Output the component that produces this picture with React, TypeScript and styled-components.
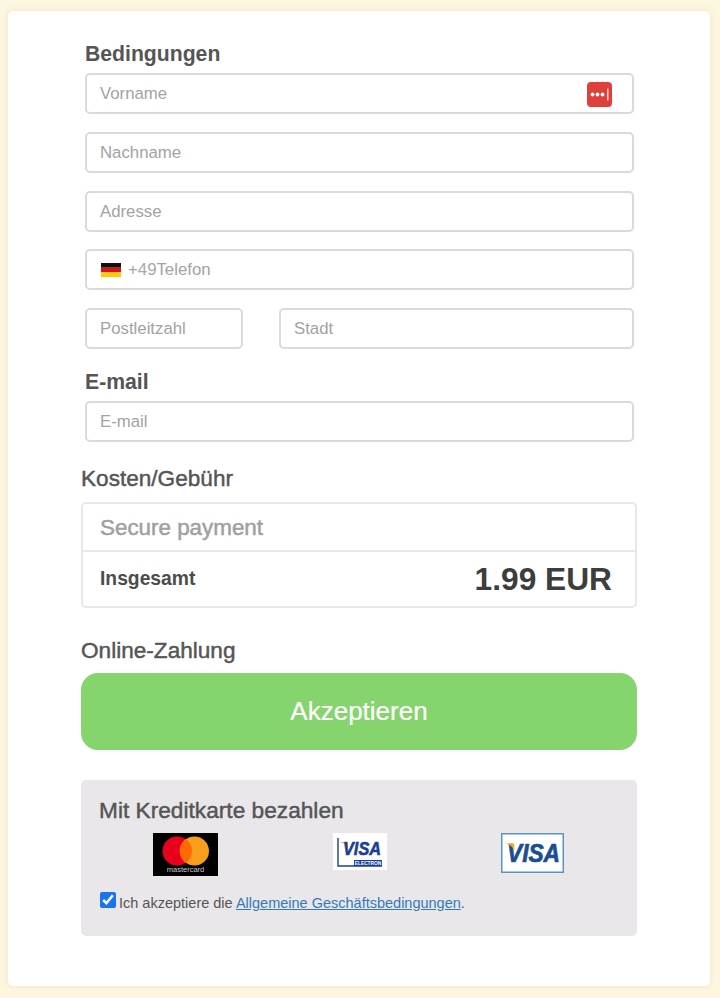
import React from "react";
import styled, { createGlobalStyle } from "styled-components";

const Global = createGlobalStyle`
  html, body { margin: 0; padding: 0; background: #fef7e0; }
  body { font-family: "Liberation Sans", Arial, sans-serif; color: #555; }
  * { box-sizing: border-box; }
`;

const Page = styled.div`
  width: 720px;
  height: 998px;
  padding: 11px 10px 12px 8px;
`;

const Card = styled.main`
  height: 975px;
  background: #fff;
  border-radius: 5px;
  box-shadow: 0 0 6px rgba(190, 180, 140, 0.3);
  padding: 29px 73px 0 73px;
`;

const Fields = styled.section`
  padding: 0 3px 0 4px;
  display: flex;
  flex-direction: column;
`;

const FieldTitle = styled.h2`
  margin: 0 0 6.4px;
  font-size: 21.2px;
  line-height: 27px;
  height: 27px;
  font-weight: 700;
  color: #555;
`;

const InputBox = styled.div<{ $grow?: boolean; $w?: number }>`
  height: 41px;
  border: 2px solid #dadada;
  border-radius: 5px;
  background: #fff;
  display: flex;
  align-items: center;
  padding: 1px 20px 0 13px;
  font-size: 16.8px;
  color: #a3a3a3;
  ${(p) => (p.$w ? `width: ${p.$w}px; flex: none;` : "")}
  ${(p) => (p.$grow ? "flex: 1;" : "")}
`;

const FieldStack = styled.div`
  display: flex;
  flex-direction: column;
  gap: 17.7px;
`;

const Split = styled.div`
  display: flex;
  gap: 36px;
`;

const Flag = styled.svg`
  width: 20px;
  height: 14px;
  margin-right: 7px;
  margin-left: 1px;
  flex: none;
`;

const Dial = styled.span`
  color: #a8a8a8;
`;

const KeyBadge = styled.svg`
  margin-left: auto;
  margin-right: 0.5px;
  width: 25px;
  height: 25px;
  flex: none;
`;

const EmailTitle = styled(FieldTitle)`
  margin: 19px 0 6px;
`;

const SectionTitle = styled.h3`
  margin: 0 0 10px;
  font-size: 22.6px;
  line-height: 27px;
  font-weight: 400;
  -webkit-text-stroke: 0.45px #555;
  color: #555;
`;

const CostTitle = styled(SectionTitle)`
  margin-top: 22.5px;
`;

const Summary = styled.section`
  border: 2px solid #e8e8e8;
  border-radius: 5px;
  height: 106px;
  display: flex;
  flex-direction: column;
`;

const SummaryHead = styled.div`
  height: 48px;
  border-bottom: 2px solid #e8e8e8;
  padding: 2px 0 0 17px;
  display: flex;
  align-items: center;
  font-size: 22.4px;
  font-weight: 400;
  -webkit-text-stroke: 0.5px #a0a0a0;
  color: #a0a0a0;
`;

const SummaryRow = styled.div`
  flex: 1;
  display: flex;
  align-items: center;
  justify-content: space-between;
  padding: 1px 23px 0 17px;
`;

const TotalLabel = styled.span`
  font-size: 19.3px;
  font-weight: 700;
  color: #4c4c4c;
`;

const TotalValue = styled.span`
  font-size: 31.7px;
  font-weight: 700;
  color: #3d3d3d;
`;

const PayTitle = styled(SectionTitle)`
  margin: 29px 0 9px;
`;

const AcceptButton = styled.button`
  display: block;
  width: 100%;
  height: 77px;
  border: 0;
  border-radius: 17px;
  background: #86d46e;
  color: #fff;
  font-family: inherit;
  font-size: 26px;
  -webkit-text-stroke: 0.2px #fff;
  cursor: pointer;
`;

const CardBox = styled.section`
  margin-top: 30px;
  height: 156px;
  background: #e9e7ea;
  border-radius: 5px;
  padding: 17px 18px 0;
`;

const CardTitle = styled.h4`
  margin: 0;
  font-size: 22.7px;
  line-height: 26px;
  font-weight: 400;
  -webkit-text-stroke: 0.45px #555;
  color: #555;
`;

const Logos = styled.div`
  display: grid;
  grid-template-columns: 65px 54px 63px;
  justify-content: space-between;
  align-items: start;
  padding: 0 55px 0 54px;
  margin-top: 10px;
  height: 43px;
`;

const Logo = styled.svg`
  display: block;
`;

const LogoWord = styled.text`
  font-family: "Liberation Sans", Arial, sans-serif;
  font-weight: 700;
  font-style: italic;
`;

const Terms = styled.label`
  display: flex;
  align-items: center;
  margin-top: 18px;
  font-size: 14.5px;
  line-height: 18px;
  color: #555;
`;

const Check = styled.input`
  width: 15.5px;
  height: 15.5px;
  margin: -5px 3.5px 0 1px;
  accent-color: #1a73f0;
`;

const TermsLink = styled.a`
  color: #337ab7;
  text-decoration: underline;
`;

export default function App() {
  return (
    <Page>
      <Global />
      <Card>
        <Fields>
          <FieldTitle>Bedingungen</FieldTitle>
          <FieldStack>
            <InputBox>
              Vorname
              <KeyBadge viewBox="0 0 25 25">
                <rect width="25" height="25" rx="4" fill="#e03f3c" />
                <circle cx="5.5" cy="12.5" r="1.9" fill="#fff" />
                <circle cx="10.5" cy="12.5" r="1.9" fill="#fff" />
                <circle cx="15.5" cy="12.5" r="1.9" fill="#fff" />
                <rect x="20.2" y="6.5" width="1.2" height="12" fill="#fff" />
              </KeyBadge>
            </InputBox>
            <InputBox>Nachname</InputBox>
            <InputBox>Adresse</InputBox>
            <InputBox>
              <Flag viewBox="0 0 20 14">
                <rect width="20" height="4.7" y="0" fill="#111" />
                <rect width="20" height="4.7" y="4.7" fill="#d8121a" />
                <rect width="20" height="4.6" y="9.4" fill="#fc0" />
              </Flag>
              <Dial>+49</Dial>Telefon
            </InputBox>
            <Split>
              <InputBox $w={158}>Postleitzahl</InputBox>
              <InputBox $grow>Stadt</InputBox>
            </Split>
          </FieldStack>
          <EmailTitle>E-mail</EmailTitle>
          <InputBox>E-mail</InputBox>
        </Fields>

        <CostTitle>Kosten/Gebühr</CostTitle>
        <Summary>
          <SummaryHead>Secure payment</SummaryHead>
          <SummaryRow>
            <TotalLabel>Insgesamt</TotalLabel>
            <TotalValue>1.99 EUR</TotalValue>
          </SummaryRow>
        </Summary>

        <PayTitle>Online-Zahlung</PayTitle>
        <AcceptButton>Akzeptieren</AcceptButton>

        <CardBox>
          <CardTitle>Mit Kreditkarte bezahlen</CardTitle>
          <Logos>
            <Logo width="65" height="43" viewBox="0 0 65 43">
              <rect width="65" height="43" fill="#000" />
              <circle cx="24" cy="18" r="14.5" fill="#e8001c" />
              <circle cx="41.5" cy="18" r="14.5" fill="#f79e1b" />
              <path d="M32.75 6.1a14.5 14.5 0 0 1 0 23.8a14.5 14.5 0 0 1 0-23.8z" fill="#ff6a00" />
              <text x="32.5" y="39" textAnchor="middle" fontSize="7.5" fill="#c8c8c8" fontFamily="Liberation Sans, Arial, sans-serif">mastercard</text>
            </Logo>
            <Logo width="54" height="37" viewBox="0 0 54 37">
              <rect width="54" height="37" fill="#fff" />
              <path d="M5 5V33H49" fill="none" stroke="#1a3f94" strokeWidth="1.4" />
              <path d="M7 9C10.5 9.5 13 11.5 14.5 15L15 9z" fill="#f2a51f" />
              <LogoWord x="10" y="22" fontSize="18.5" fill="#1a3f94" stroke="#1a3f94" strokeWidth="0.6" textLength="38" lengthAdjust="spacingAndGlyphs">VISA</LogoWord>
              <rect x="21" y="27" width="28" height="6" fill="#1a3f94" />
              <text x="35" y="32" textAnchor="middle" fontSize="4.8" fontWeight="700" fill="#fff" fontFamily="Liberation Sans, Arial, sans-serif">ELECTRON</text>
            </Logo>
            <Logo width="63" height="40" viewBox="0 0 63 40">
              <rect x="0.75" y="0.75" width="61.5" height="38.5" fill="#fff" stroke="#5b93c8" strokeWidth="1.5" />
              <LogoWord x="6" y="28.5" fontSize="25" fill="#1a4f8f" stroke="#1a4f8f" strokeWidth="0.7" textLength="53" lengthAdjust="spacingAndGlyphs">VISA</LogoWord>
              <path d="M4 10.5C8 11 11 13 13.5 17.5L13 10.5z" fill="#f2a51f" />
            </Logo>
          </Logos>
          <Terms>
            <Check type="checkbox" defaultChecked />
            <span>
              Ich akzeptiere die <TermsLink href="#">Allgemeine Geschäftsbedingungen</TermsLink>.
            </span>
          </Terms>
        </CardBox>
      </Card>
    </Page>
  );
}
